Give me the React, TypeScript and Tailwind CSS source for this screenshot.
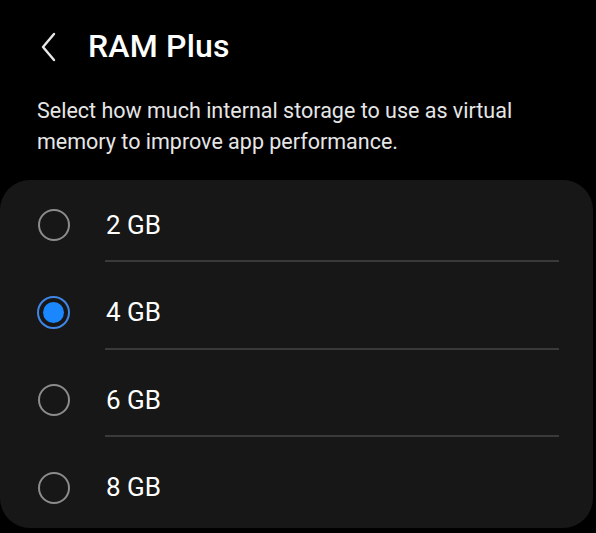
const options = ['2 GB', '4 GB', '6 GB', '8 GB'];

function Radio({ checked }: { checked: boolean }) {
    if (checked) {
        return (
            <div className="w-[33px] h-[33px] rounded-full border-2 border-[#3f86e6] flex items-center justify-center">
                <div className="w-[21px] h-[21px] rounded-full bg-[#1b87ff]" />
            </div>
        );
    }
    return <div className="w-[32px] h-[32px] rounded-full border-2 border-[#8c8c8c]" />;
}

export default function App() {
    const selected = '4 GB';

    return (
        <div className="w-[596px] h-[533px] bg-black overflow-hidden" style={{ fontFamily: 'Roboto, "Noto Sans", sans-serif' }}>
            <div className="flex items-center h-[92px] pl-[40px]">
                <svg width="18" height="30" viewBox="0 0 18 30" fill="none" className="mt-[1px]">
                    <path d="M14 2 L3 15 L14 28" stroke="#e8e8e8" strokeWidth="2.4" strokeLinecap="round" strokeLinejoin="round" />
                </svg>
                <h1 className="ml-[30px] text-[32px] font-medium text-white tracking-[0.2px]">RAM Plus</h1>
            </div>

            <p className="ml-[37px] w-[530px] text-[21.5px] leading-[31px] text-[#e6e6e6] mt-[3px]">
                Select how much internal storage to use as virtual memory to improve app performance.
            </p>

            <div className="mt-[23px] w-[593px] bg-[#171717] rounded-[30px] pt-[10px] pb-[5px]">
                {options.map((opt, i) => (
                    <div key={opt} className={i > 0 ? 'mt-[15.6px]' : ''}>
                        <div className="flex items-center h-[70px]">
                            <div className="w-[105px] flex justify-center pl-[2px]">
                                <Radio checked={opt === selected} />
                            </div>
                            <span className="ml-[1px] text-[26px] text-white">{opt}</span>
                        </div>
                        {i < options.length - 1 && <div className="ml-[105px] w-[454px] h-[2px] bg-[#3a3a3a]" />}
                    </div>
                ))}
            </div>
        </div>
    );
}
